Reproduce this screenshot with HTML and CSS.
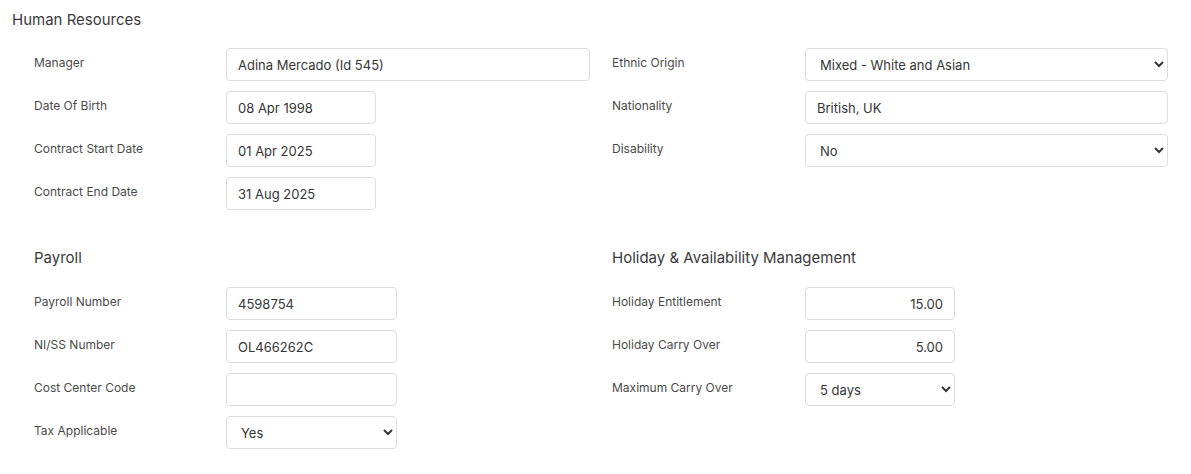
FILE: index.html
```html
<!DOCTYPE html>
<html lang="en">
<head>
<meta charset="utf-8">
<title>Employee details</title>
<link rel="stylesheet" href="styles.css">
</head>
<body>
<main class="page">
  <h2 class="page-title">Human Resources</h2>

  <div class="columns hr">
    <div class="col">
      <div class="row"><label class="lbl">Manager</label><input class="field full" type="text" value="Adina Mercado (Id 545)"></div>
      <div class="row"><label class="lbl">Date Of Birth</label><input class="field date" type="text" value="08 Apr 1998"></div>
      <div class="row"><label class="lbl">Contract Start Date</label><input class="field date" type="text" value="01 Apr 2025"></div>
      <div class="row"><label class="lbl">Contract End Date</label><input class="field date" type="text" value="31 Aug 2025"></div>
    </div>
    <div class="col">
      <div class="row"><label class="lbl">Ethnic Origin</label>
        <select class="field full"><option>Mixed - White and Asian</option></select></div>
      <div class="row"><label class="lbl">Nationality</label><input class="field full" type="text" value="British, UK"></div>
      <div class="row"><label class="lbl">Disability</label>
        <select class="field full"><option>No</option></select></div>
    </div>
  </div>

  <div class="columns lower">
    <div class="col">
      <h3 class="section-title">Payroll</h3>
      <div class="row"><label class="lbl">Payroll Number</label><input class="field mid" type="text" value="4598754"></div>
      <div class="row"><label class="lbl">NI/SS Number</label><input class="field mid" type="text" value="OL466262C"></div>
      <div class="row"><label class="lbl">Cost Center Code</label><input class="field mid" type="text" value=""></div>
      <div class="row"><label class="lbl">Tax Applicable</label>
        <select class="field mid"><option>Yes</option></select></div>
    </div>
    <div class="col">
      <h3 class="section-title">Holiday &amp; Availability Management</h3>
      <div class="row"><label class="lbl">Holiday Entitlement</label><input class="field date num" type="text" value="15.00"></div>
      <div class="row"><label class="lbl">Holiday Carry Over</label><input class="field date num" type="text" value="5.00"></div>
      <div class="row"><label class="lbl">Maximum Carry Over</label>
        <select class="field date"><option>5 days</option></select></div>
    </div>
  </div>
</main>
</body>
</html>
```

FILE: styles.css
```css
* { box-sizing: border-box; }

body {
  margin: 0;
  background: #fff;
  font-family: Inter, "Liberation Sans", sans-serif;
  color: #333;
}

.page {
  padding: 8px 23px 0 12px;
}

.page-title {
  margin: 0;
  font-size: 15px;
  font-weight: 400;
  line-height: 24px;
  color: #3a3a3a;
}

.columns {
  display: grid;
  grid-template-columns: 556px 556px;
  column-gap: 22px;
  padding-left: 22px;
}

.columns.hr { margin-top: 16px; }
.columns.lower { margin-top: 35px; }

.col {
  display: flex;
  flex-direction: column;
  gap: 10px;
}

.section-title {
  margin: 1px 0 7px;
  font-size: 15px;
  font-weight: 400;
  line-height: 24px;
  color: #3a3a3a;
}

.row {
  display: flex;
  align-items: flex-start;
  height: 33px;
}

.lbl {
  width: 192px;
  flex: none;
  padding-top: 5px;
  font-size: 12px;
  line-height: 20px;
  color: #4a4a4a;
}

.col:nth-child(2) .lbl { width: 193px; }

.field {
  height: 33px;
  border: 1px solid #dcdcdc;
  border-radius: 4px;
  background: #fff;
  padding: 0 11px;
  font-family: Inter, "Liberation Sans", sans-serif;
  font-size: 13px;
  color: #363636;
}

select.field { padding-left: 10px; }

.full { width: 364px; }
.col:nth-child(2) .full { width: 363px; }
.date { width: 150px; }
.mid { width: 171px; }
.num { text-align: right; }
```
